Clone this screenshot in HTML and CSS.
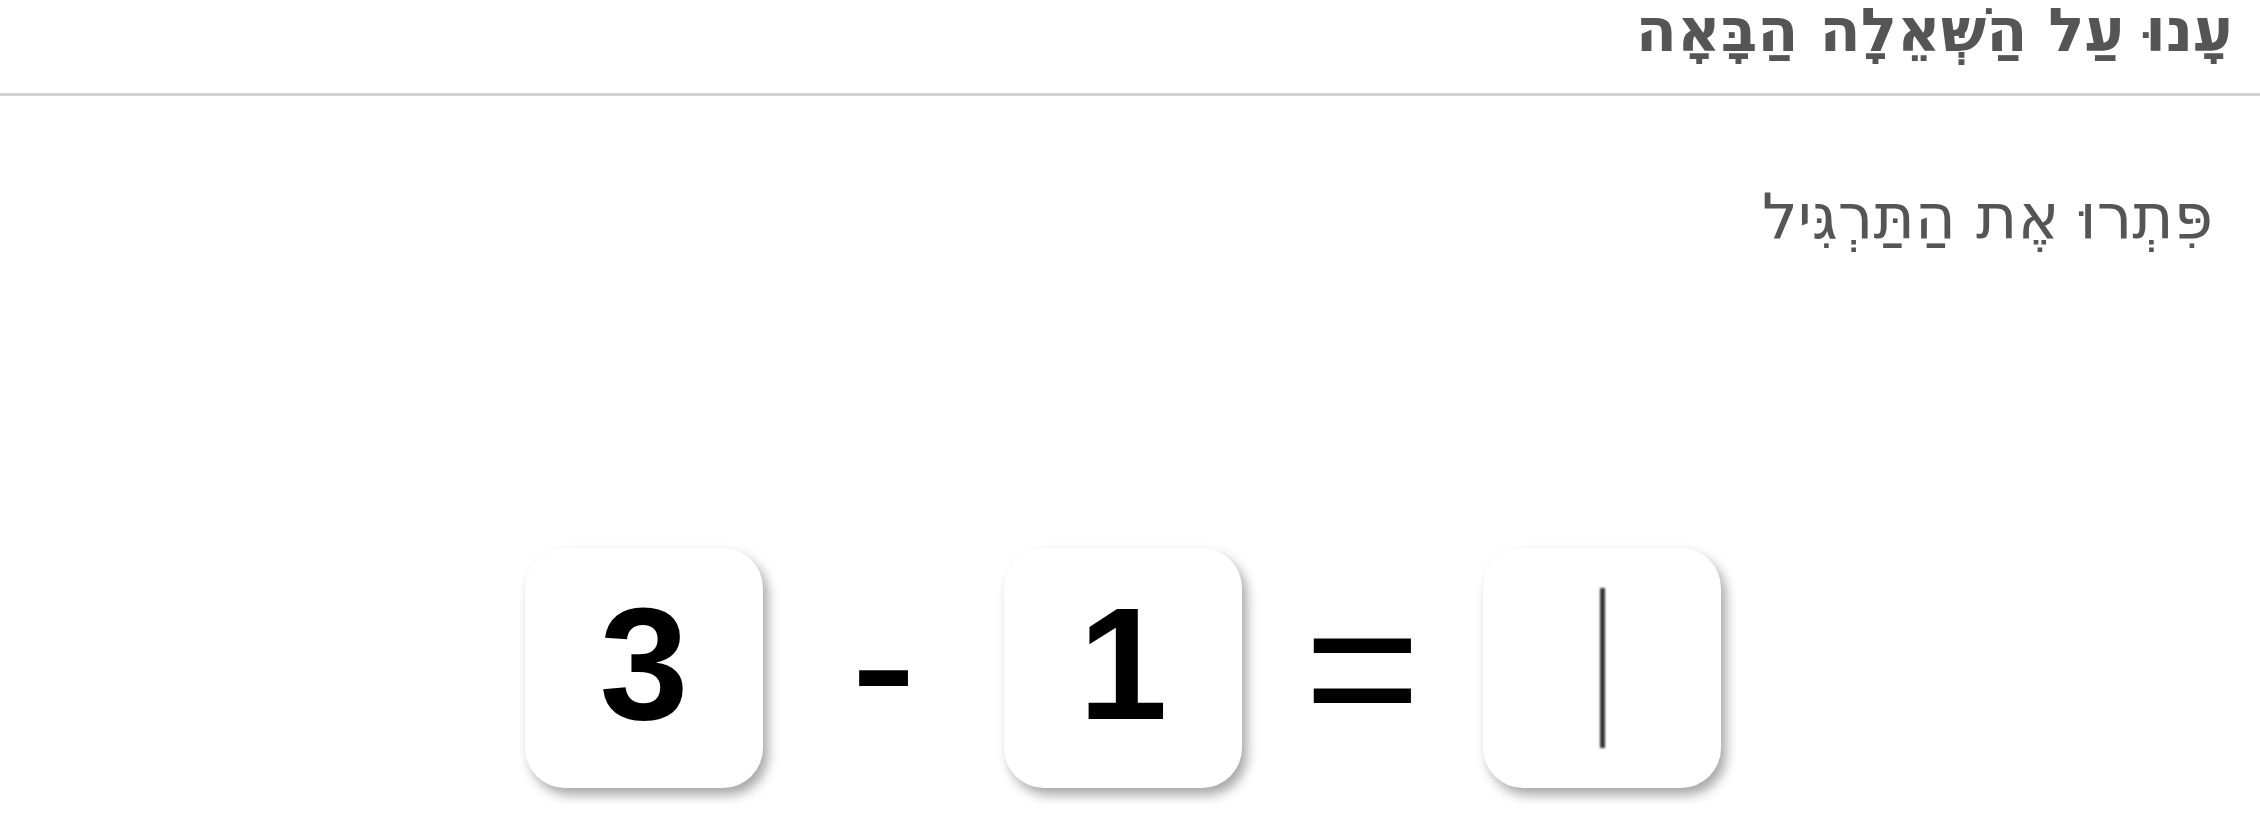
FILE: index.html
```html
<!DOCTYPE html>
<html lang="he" dir="rtl">
<head>
  <meta charset="UTF-8" />
  <meta name="viewport" content="width=device-width, initial-scale=1.0"/>
  <title>תרגיל חיסור</title>
  <link rel="stylesheet" href="styles.css">
</head>
<body>

  <div class="top-bar">
    <h1>עָנוּ עַל הַשְּׁאֵלָה הַבָּאָה</h1>
  </div>

  <p class="instruction">פִּתְרוּ אֶת הַתַּרְגִּיל</p>

  <div class="equation">
    <div class="tile">3</div>
    <div class="operator minus">-</div>
    <div class="tile">1</div>
    <div class="operator">=</div>
    <div class="tile answer"><span class="caret"></span></div>
  </div>

</body>
</html>
```

FILE: styles.css
```css
:root {
  --text: #555;
  --line: #d2d2d2;
  --tile-bg: #fff;
}

* {
  box-sizing: border-box;
}

body {
  margin: 0;
  min-height: 100vh;
  padding-bottom: 30px;
  font-family: 'DejaVu Sans', sans-serif;
  background: #fff;
  color: var(--text);
}

.top-bar {
  display: flex;
  align-items: flex-start;
  height: 96px;
  border-bottom: 3px solid var(--line);
  padding: 0 27px;
}

.top-bar h1 {
  margin: 0;
  font-size: 60px;
  font-weight: 700;
  height: 60px;
  line-height: 60px;
}

.instruction {
  margin: 0;
  padding: 0 47px;
  font-size: 63px;
  height: 74px;
  line-height: 74px;
  margin-top: 84px;
}

/* exercise row: tiles + operators */
.equation {
  direction: ltr;
  display: flex;
  justify-content: center;
  align-items: center;
  margin-top: 294px;
  padding-right: 14px;
  font-family: 'Liberation Sans', Arial, sans-serif;
  color: #000;
}

.tile {
  width: 238px;
  height: 240px;
  padding-bottom: 8px;
  background: var(--tile-bg);
  border-radius: 40px;
  box-shadow: 5px 7px 12px rgba(0, 0, 0, 0.35);
  display: flex;
  align-items: center;
  justify-content: center;
  font-size: 160px;
  font-weight: 700;
  line-height: 1;
}

.operator {
  width: 241px;
  text-align: center;
  font-size: 200px;
  line-height: 1;
}

.operator.minus {
  margin-bottom: 12px;
}

.answer {
  padding-bottom: 0;
}

.caret {
  width: 5px;
  height: 160px;
  background: #333;
  filter: blur(1px);
}
```
